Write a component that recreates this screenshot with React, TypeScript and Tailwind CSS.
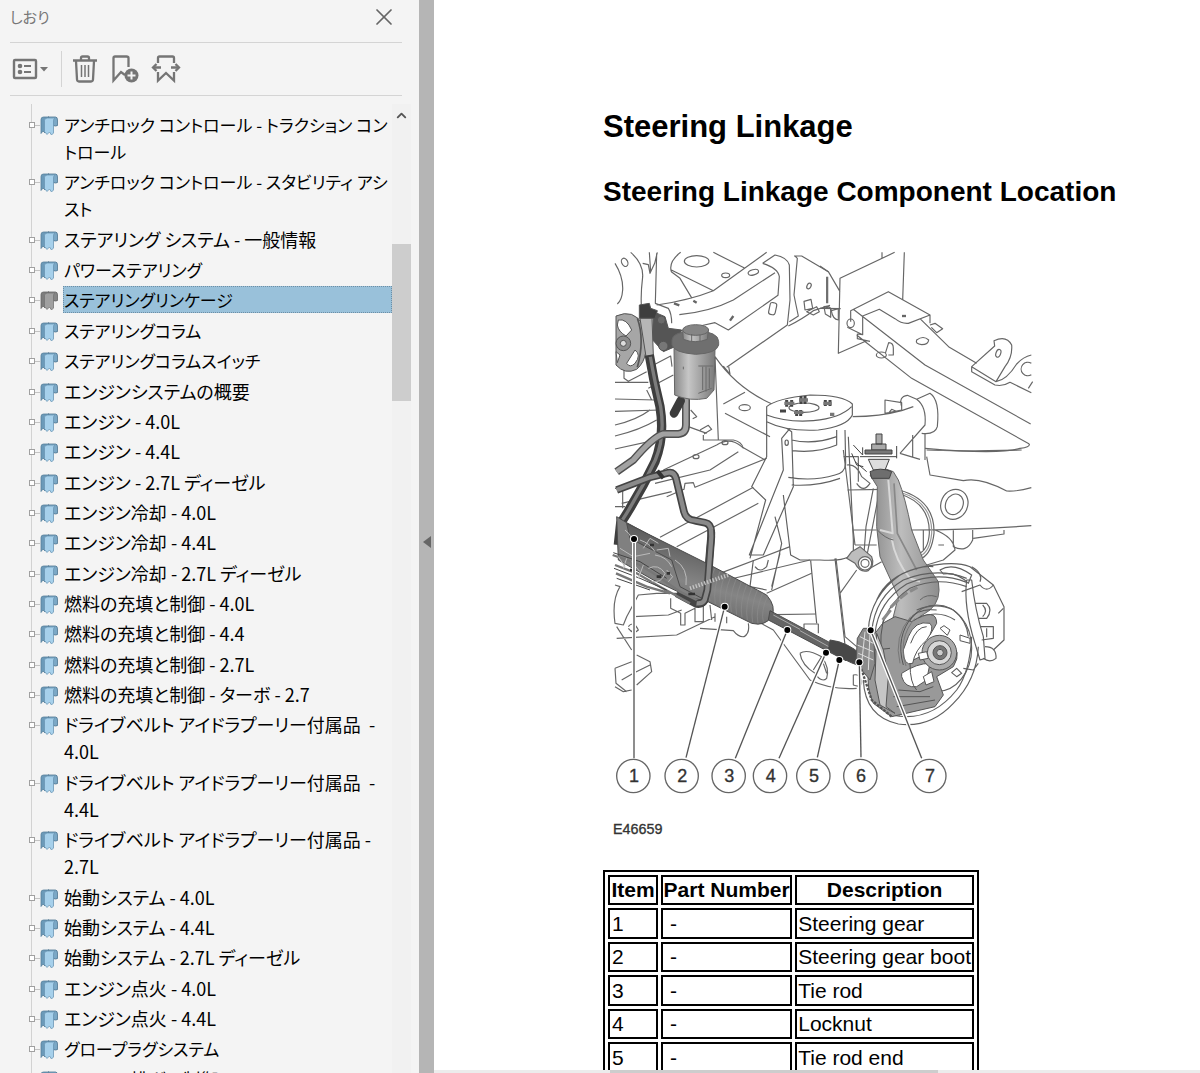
import { ChevronUp, X } from "lucide-react";

const bookmarks = [
  { title: "アンチロック コントロール - トラクション コン\nトロール" },
  { title: "アンチロック コントロール - スタビリティ アシ\nスト" },
  { title: "ステアリング システム - 一般情報" },
  { title: "パワーステアリング" },
  { title: "ステアリングリンケージ", selected: true },
  { title: "ステアリングコラム" },
  { title: "ステアリングコラムスイッチ" },
  { title: "エンジンシステムの概要" },
  { title: "エンジン - 4.0L" },
  { title: "エンジン - 4.4L" },
  { title: "エンジン - 2.7L ディーゼル" },
  { title: "エンジン冷却 - 4.0L" },
  { title: "エンジン冷却 - 4.4L" },
  { title: "エンジン冷却 - 2.7L ディーゼル" },
  { title: "燃料の充填と制御 - 4.0L" },
  { title: "燃料の充填と制御 - 4.4" },
  { title: "燃料の充填と制御 - 2.7L" },
  { title: "燃料の充填と制御 - ターボ - 2.7" },
  { title: "ドライブベルト アイドラプーリー付属品  -\n4.0L" },
  { title: "ドライブベルト アイドラプーリー付属品  -\n4.4L" },
  { title: "ドライブベルト アイドラプーリー付属品 -\n2.7L" },
  { title: "始動システム - 4.0L" },
  { title: "始動システム - 4.4L" },
  { title: "始動システム - 2.7L ディーゼル" },
  { title: "エンジン点火 - 4.0L" },
  { title: "エンジン点火 - 4.4L" },
  { title: "グロープラグシステム" },
  { title: "エンジン排ガス制御" },
];

// kanji or digits in the title
const isMixed = (title: string) => /[\u4e00-\u9fff0-9]/.test(title);

const parts = ["Steering gear", "Steering gear boot", "Tie rod", "Locknut", "Tie rod end"];

// dot on the part -> numbered circle
const callouts = [
  { n: 1, dot: [102, 897], end: [102, 1555], cx: 100 },
  { n: 2, dot: [374, 1100], end: [258, 1553], cx: 245 },
  { n: 3, dot: [562, 1170], end: [406, 1555], cx: 386 },
  { n: 4, dot: [678, 1238], end: [537, 1555], cx: 510 },
  { n: 5, dot: [718, 1260], end: [652, 1552], cx: 640 },
  { n: 6, dot: [778, 1267], end: [783, 1552], cx: 781 },
  { n: 7, dot: [812, 1171], end: [965, 1555], cx: 988 },
];

function BookmarkIcon({ selected }: { selected?: boolean }) {
  return (
    <svg viewBox="0 0 18 20" className="mt-[5px] h-5 w-[18px] shrink-0" strokeWidth="0.8" aria-hidden="true">
      <path d="M1 3.500 Q1 1 3.500 1 H9 L5 4 V17 L3 15 L1 17.500 Z" fill={selected ? "#7d7d7d" : "#6b9ab9"} stroke={selected ? "#666" : "#557f9b"} />
      <path d="M8 1 H15.500 Q17.500 1 17.500 4 V9.500 Q16 10.500 13 9.500 V4 Z" fill={selected ? "#858585" : "#7ba8c6"} stroke={selected ? "#636363" : "#4f7590"} />
      <path d="M4.500 4.500 Q4.500 2 7.500 2 H15 Q13.500 2.500 13.500 5 V17 L11.500 19 L9.500 16 L7 18.500 L4.500 15.500 Z" fill={selected ? "#a0a0a0" : "#a6d0eb"} stroke={selected ? "#757575" : "#6c97b5"} />
    </svg>
  );
}

function Toolbar() {
  return (
    <div className="mr-[17px] ml-[10px] flex h-[53px] items-center border-b border-[#d4d4d4] text-[#757575]">
      <button aria-label="オプション" className="flex h-9 w-[41px] items-center">
        <svg viewBox="0 0 38 24" className="h-6 w-[38px]">
          <rect x="4" y="3" width="22" height="18" rx="1" fill="none" stroke="currentColor" strokeWidth="2.400" />
          <circle cx="10" cy="9" r="2.300" fill="currentColor" />
          <circle cx="10" cy="15" r="2.300" fill="currentColor" />
          <path d="M14 9 H21 M14 15 H21" stroke="currentColor" strokeWidth="2" />
          <path d="M30 10 H38 L34 14.500 Z" fill="currentColor" />
        </svg>
      </button>
      <span className="ml-[10px] h-9 w-px bg-[#d4d4d4]" />
      <button aria-label="削除" className="ml-[10px]">
        <svg viewBox="0 0 26 30" className="h-[30px] w-[26px]" fill="none" stroke="currentColor" strokeWidth="2.300">
          <path d="M1 6.500 H25 M9 6 V4 Q9 2.500 10.500 2.500 H15.500 Q17 2.500 17 4 V6" />
          <path d="M4 7 L5 25.500 Q5.200 27.500 7 27.500 H19 Q20.800 27.500 21 25.500 L22 7" />
          <path d="M9.500 11 V23 M13 11 V23 M16.500 11 V23" strokeWidth="1.500" />
        </svg>
      </button>
      <button aria-label="しおりを追加" className="ml-[13px]">
        <svg viewBox="0 0 30 30" className="h-[30px] w-[30px]" fill="none" stroke="currentColor" strokeWidth="2.300">
          <path d="M14 21 L10 18 L2.500 26.500 V4 Q2.500 2.500 4 2.500 H15.500 Q17.500 2.500 17.500 4 V13" />
          <circle cx="20.500" cy="21.500" r="7" fill="currentColor" stroke="none" />
          <path d="M16.500 21.500 H24.500 M20.500 17.500 V25.500" stroke="#f4f4f4" strokeWidth="2" />
        </svg>
      </button>
      <button aria-label="しおりを展開" className="ml-[10px]">
        <svg viewBox="0 0 30 30" className="h-[30px] w-[30px]" fill="none" stroke="currentColor" strokeWidth="2.300">
          <path d="M7 9 V4 Q7 2.500 8.500 2.500 H21.500 Q23 2.500 23 4 V9 M7 18 V26.500 L15 19 L23 26.500 V18" />
          <path d="M2 13.500 H10 M20 13.500 H28" />
          <path d="M5.500 10 L2 13.500 L5.500 17 M24.500 10 L28 13.500 L24.500 17" />
        </svg>
      </button>
    </div>
  );
}

function SteeringDiagram() {
  return (
    <svg viewBox="0 0 1350 1800" className="block w-[450px]" role="img" aria-label="Steering linkage component location">
      <defs>
        <linearGradient id="can" x1="0" x2="1">
          <stop offset="0" stopColor="#888" />
          <stop offset="0.35" stopColor="#c6c6c6" />
          <stop offset="1" stopColor="#7a7a7a" />
        </linearGradient>
        <linearGradient id="knuckle" x1="0" x2="1">
          <stop offset="0" stopColor="#8a8a8a" />
          <stop offset="0.45" stopColor="#bdbdbd" />
          <stop offset="1" stopColor="#8d8d8d" />
        </linearGradient>
        <linearGradient id="boot" x1="0" y1="1" x2="0.4" y2="0">
          <stop offset="0" stopColor="#4e4e4e" />
          <stop offset="0.5" stopColor="#858585" />
          <stop offset="1" stopColor="#4a4a4a" />
        </linearGradient>
      </defs>

      {/* chassis, upper left */}
      <g fill="none" stroke="#666" strokeWidth="3.500" strokeLinejoin="round">
        <path d="M45 70 Q70 110 68 150 Q66 180 52 192 M92 37 Q130 70 128 110 Q122 160 124 195 M128 70 L145 74 L150 100 L164 70 L172 37 M148 37 L152 95 M170 40 L166 190 L205 205 Q215 220 215 250" />
        <ellipse cx="74" cy="67" rx="9" ry="13" transform="rotate(-25 74 67)" />
        <path d="M242 37 Q205 65 214 95 L240 115 L276 175 M214 90 L340 152 L500 37 M340 37 L435 85 M170 195 Q270 180 340 152 M238 224 Q330 215 400 180 L525 98" />
        <ellipse cx="290" cy="64" rx="37" ry="17" />
        <ellipse cx="377" cy="106" rx="12" ry="7" />
        <ellipse cx="460" cy="97" rx="16" ry="8" transform="rotate(-15 460 97)" />
        <path d="M488 70 Q535 85 538 110 L534 166 L385 270 L345 248 L300 258 M488 70 L525 45 Q562 52 568 75 L570 180 L562 255 L380 382 M585 48 L592 55 L582 165 L588 195 L595 228 L568 245 M582 48 L605 48 L685 95 M565 258 Q610 235 640 212 L690 196 M683 110 V190" />
        <rect x="508" y="188" width="20" height="36" rx="7" transform="rotate(12 518 206)" />
        <ellipse cx="627" cy="138" rx="6" ry="9" transform="rotate(25 627 138)" />
        <path d="M612 184 L633 178 L638 205 L615 210 Z M620 215 L650 200 L658 215 L640 225 Z M672 200 L692 206 V232 L676 222 Z" />
        <path d="M222 190 L238 196 M280 182 L290 188 M390 242 L400 228" strokeWidth="7" />
        <path d="M72 390 V415 L85 424 L140 395 M145 445 L220 405 M140 450 L155 480 M45 427 H145 M45 477 L165 480 M45 514 L180 510 M45 555 Q110 540 150 510 M45 588 Q120 570 170 540 M45 627 L160 602 M148 382 L212 348 L216 380" />
        <path d="M345 350 L355 600 M345 350 Q410 445 516 492 M370 378 L390 402 L386 380 M370 492 L435 457 M375 520 L510 590 M272 510 L290 530 L278 536 M265 560 L320 580 M300 570 L325 556 L335 568 L312 582 M310 585 V600 H400 Q425 605 430 625" />
        <ellipse cx="434" cy="503" rx="17" ry="9" />
        <ellipse cx="375" cy="608" rx="9" ry="6" />
        <ellipse cx="288" cy="650" rx="9" ry="6" />
        <path d="M190 690 L350 615 Q390 590 425 620 L495 660 M165 730 L330 690 L415 635 M200 770 L252 748 L255 730 L280 728 L285 742 L500 655 M65 790 L215 755 M180 892 L460 742 M230 920 L475 790 M320 1015 L570 920 M380 1020 L630 960 M500 1060 L635 1000 M520 1124 L648 1122" />
      </g>

      {/* rail and bracket, upper right */}
      <g transform="translate(660 0)" fill="none" stroke="#666" strokeWidth="3.500" strokeLinejoin="round">
        <path d="M224 37 L60 115 L55 340 L140 302 M186 37 V56 M253 37 L248 180 M0 78 L25 95 L60 155 M20 110 V190 M0 205 L62 206" />
        <path d="M92 245 V212 L205 155 L330 225 V250 M330 225 L265 250 Q245 252 225 236 L178 208 L128 228 V284 L82 262 M100 208 L315 375 L632 552 M110 285 L275 415 L628 612 M300 236 L388 322 L470 370 M128 284 L112 282 V296 L150 304" />
        <ellipse cx="92" cy="250" rx="11" ry="13" />
        <path d="M12 200 Q30 195 34 212 L55 206 V240 Q38 238 34 212 M330 255 L345 250 L368 266 L350 278 L334 262 M196 340 L206 308 Q220 308 220 325 V345 H205" />
        <ellipse cx="184" cy="345" rx="15" ry="9" />
        <path d="M290 300 Q310 285 326 300 Q325 314 305 314 Q285 312 290 300 Z" />
        <path d="M246 228 H258" strokeWidth="7" />
        <path d="M455 380 L524 318 L522 302 Q560 285 575 315 Q578 350 555 380 L528 425 L455 380 V395 L525 435 Q550 440 570 427 L634 458 M528 425 Q560 420 590 372 Q610 350 634 345 M634 370 A20 20 0 1 0 634 404 M625 445 L638 425" />
        <ellipse cx="535" cy="340" rx="7" ry="12" transform="rotate(20 535 340)" />
        <path d="M315 625 Q540 645 600 625 Q630 622 628 612" />
        <path d="M195 520 V480 L245 488 V510 Z M245 500 Q235 470 262 466 L290 478 L330 460 Q360 480 352 560 Q345 585 305 580 M290 478 Q320 500 315 555 L240 640 M98 530 Q180 530 245 512 L280 500 M205 520 L215 508 L232 515 M278 585 V650 M315 580 V660 M240 640 L300 658" />
      </g>

      {/* strut tower */}
      <g fill="none" stroke="#606060" strokeWidth="3.500" strokeLinejoin="round">
        <path d="M500 500 Q530 475 630 465 Q730 465 757 492 V525 Q740 560 655 570 Q560 575 500 545 Z" fill="#fff" />
        <path d="M500 525 Q560 548 640 542 Q720 535 755 500 M500 545 V650 L455 740 L497 780 L450 955 M570 565 L545 595 L550 690 L448 945 L490 945 L580 740 L575 575 L560 565 M575 600 Q640 615 710 590 M578 632 Q650 640 710 615 V570 M565 712 Q640 725 705 705 Q735 700 737 670 L735 570 M575 735 Q650 740 720 715 M745 590 L760 900 V940 Q740 965 660 960 H600 L572 945 L550 765 M525 830 L545 910 L515 1050 M540 940 L515 1040 M632 962 L650 1150 M705 955 L735 1215 M460 960 L450 1040 L500 1050" />
        <ellipse cx="612" cy="503" rx="45" ry="14" />
        <ellipse cx="560" cy="608" rx="5" ry="8" />
        <path d="M465 980 Q480 1000 500 980 L505 960" />
        <path d="M560 480 V500 M575 480 V500 M603 468 V492 M615 468 V492 M590 510 V528 M602 510 V528 M676 480 V498 M690 480 V498 M540 513 H558" strokeWidth="9" stroke="#444" />
        <path d="M553 490 H583 M597 480 H624 M582 517 H610 M670 490 H695 M690 523 H703" strokeWidth="10" stroke="#777" />
      </g>

      {/* subframe, lower left */}
      <g fill="none" stroke="#666" strokeWidth="3.500" strokeLinejoin="round">
        <path d="M45 1035 L60 1040 Q35 1080 45 1150 L70 1155 L80 1130 L115 1065 L170 1060 H240 M50 1160 L95 1230 M50 1195 L230 1185 L345 1130 M100 1130 L205 1125 L245 1110 M85 1160 Q100 1140 115 1170 Q100 1185 85 1165 M212 1075 V1105 L242 1120 V1155 H255 V1120 L285 1105 V1145 H310 V1095 M330 1095 L335 1140 M345 1120 V1145 M380 1130 V1150 M300 1165 L400 1172 Q415 1192 432 1190 Q450 1180 445 1150 M465 1140 L520 1170 L630 1320 Q690 1350 770 1345 M110 1245 L150 1265 L155 1295 L110 1335 M45 1285 L95 1265 M45 1285 L48 1330 L80 1355 M65 1320 L100 1300 L150 1275 M45 1340 L70 1355 L95 1350" />
        <path d="M600 1240 Q620 1225 665 1250 Q690 1285 680 1315 Q665 1330 645 1300 Q605 1275 600 1240 M665 1250 L640 1290 M670 1270 L680 1300" />
        <path d="M612 1170 V1152 H655 V1180 M760 1305 Q780 1300 785 1325 Q785 1345 760 1335 Z" />
        <path d="M45 745 H68 V805 M45 800 L75 800" />
      </g>

      {/* pump pulley */}
      <g stroke="#555" strokeWidth="3">
        <path d="M48 228 Q100 205 130 255 Q155 350 110 388 Q75 405 48 375 Z" fill="#a6a6a6" />
        <path d="M55 240 Q80 235 95 270 L78 288 Q55 275 52 255 Z M105 330 Q125 345 105 370 Q90 385 80 370 Z M48 335 L60 345 L52 368 Z" fill="#fff" />
        <circle cx="70" cy="310" r="22" fill="#8a8a8a" />
        <circle cx="70" cy="310" r="9" fill="#ddd" />
        <path d="M112 235 Q135 300 112 382" fill="none" strokeWidth="5" />
        <path d="M160 215 L195 230 L205 265 L245 270 L225 320 L190 335 L158 300 Z" fill="#555" />
        <path d="M118 195 L148 190 L152 205 L172 212 L165 235 L118 235 Z" fill="#3e3e3e" />
        <path d="M120 235 L156 235 L160 345 L138 350 Z" fill="#b6b6b6" />
        <circle cx="190" cy="318" r="14" fill="#777" />
        <circle cx="184" cy="240" r="12" fill="#6b6b6b" />
      </g>

      {/* hoses and lines */}
      <g fill="none" strokeLinejoin="round" strokeLinecap="butt">
        <path d="M148 345 Q160 420 180 500 Q195 590 165 665 Q120 760 62 850 L55 915" stroke="#3e3e3e" strokeWidth="28" />
        <path d="M151 350 Q163 420 182 500 Q196 590 166 660 Q122 755 66 842" stroke="#7c7c7c" strokeWidth="10" />
        <path d="M258 470 V555 Q258 580 235 582 L190 582 Q160 590 100 660 L50 695" stroke="#4f4f4f" strokeWidth="24" />
        <path d="M258 470 V555 Q258 580 235 582 L190 582 Q160 590 100 660 L50 695" stroke="#a2a2a2" strokeWidth="15" />
        <path d="M50 750 L150 712 L205 698 Q222 695 228 715 L252 815 Q258 840 285 842 L315 848 Q335 852 334 880 L318 1070 Q312 1095 290 1092 L230 1060" stroke="#444" strokeWidth="23" />
        <path d="M50 750 L150 712 L205 698 Q222 695 228 715 L252 815 Q258 840 285 842 L315 848 Q335 852 334 880 L318 1070 Q312 1095 290 1092" stroke="#8a8a8a" strokeWidth="13" />
        <path d="M172 692 L190 715" stroke="#333" strokeWidth="12" />
        <path d="M222 520 L242 482" stroke="#3c3c3c" strokeWidth="26" strokeLinecap="round" />
      </g>

      {/* fluid reservoir */}
      <g stroke="#666" strokeWidth="3">
        <path d="M222 325 L224 465 Q270 485 320 475 L342 450 L345 325 Z" fill="url(#can)" />
        <path d="M295 378 H340 M318 380 V455 M308 380 V450 M328 385 V445 M295 460 L335 445 M250 380 V388" fill="none" stroke="#6a6a6a" />
        <path d="M216 300 Q216 275 287 272 Q356 275 356 305 V315 Q350 340 287 343 Q222 338 216 315 Z" fill="#6f6f6f" />
        <path d="M248 270 L250 298 Q285 312 322 298 L325 270 Z" fill="url(#can)" />
        <ellipse cx="287" cy="270" rx="39" ry="16" fill="#858585" />
        <path d="M275 282 V305 M300 284 V304" />
      </g>

      {/* steering rack, boot and tie rod */}
      <g stroke="#4b4b4b" strokeWidth="3" strokeLinejoin="round">
        <path d="M50 830 L80 848 L250 940 L320 975 L325 1085 L270 1072 L160 1020 L55 960 Z" fill="#808080" />
        <path d="M80 850 L330 975 L500 1065 Q530 1100 515 1130 Q495 1160 455 1150 L330 1088 L240 1040 L215 960 L90 895 Z" fill="url(#boot)" />
        <g stroke="#8d8d8d" strokeWidth="2" fill="none">
          <path d="M344 986 Q320 1040 330 1084 M360 994 Q338 1048 346 1092 M376 1002 Q354 1056 362 1100 M392 1010 Q370 1064 378 1108 M408 1018 Q386 1072 394 1116 M424 1026 Q402 1080 410 1124 M440 1034 Q418 1088 426 1132 M456 1042 Q434 1096 442 1140 M472 1050 Q450 1104 458 1148 M488 1060 Q466 1110 474 1150 M502 1070 Q482 1115 490 1145" />
        </g>
        <path d="M333 870 L334 890 L322 1050 L314 1080 Q308 1092 290 1090" fill="none" stroke="#444" strokeWidth="23" />
        <path d="M333 870 L334 890 L322 1050 L314 1080 Q308 1092 290 1090" fill="none" stroke="#8a8a8a" strokeWidth="13" />
        <path d="M510 1112 L690 1208 L750 1240 L738 1262 L680 1232 L505 1140 Z" fill="#656565" />
        <path d="M600 1172 L690 1222 M520 1125 L600 1168" fill="none" stroke="#aaa" />
        <path d="M690 1200 Q740 1205 785 1245 L772 1275 Q740 1265 685 1230 Z" fill="#484848" />
      </g>
      <g fill="none" stroke="#555" strokeWidth="3">
        <path d="M38 945 Q80 960 120 975 L160 1000 L240 1055 L290 1080 M45 975 L110 1000 L180 1040 L270 1090 M48 1000 L140 1040 L210 1060" strokeWidth="7" stroke="#777" />
        <path d="M40 938 L120 965 L200 1015 M42 985 L120 1015 L200 1050 M50 1015 L150 1050" stroke="#444" />
        <path d="M55 950 L75 980 M80 955 L70 985 M95 965 L120 995 M130 975 L115 1015 M145 985 Q175 970 195 1000 Q185 1030 155 1025 M165 945 Q200 950 215 980 M120 900 Q150 910 165 935 M200 990 L218 1010 L205 1025 M225 960 Q265 985 258 1035 M75 870 Q105 890 100 940 M130 925 L150 895 L175 910 M170 930 L205 925 L210 950 M60 925 L100 950 L150 940" stroke="#bbb" strokeWidth="3" />
        <path d="M270 1045 L385 1005" stroke="#c4c4c4" strokeWidth="12" strokeDasharray="4 5" />
        <path d="M150 915 h12 M90 990 h12 M200 1000 h10 M170 1010 h14 M265 1062 h20" stroke="#333" strokeWidth="8" />
      </g>

      {/* right subframe */}
      <g transform="translate(660 630)" fill="none" stroke="#666" strokeWidth="3.500" strokeLinejoin="round">
        <path d="M320 20 L330 75 L430 92 Q480 80 560 123 Q590 125 634 113 M270 240 Q450 240 634 227 M320 0 Q400 5 605 0 M400 237 V290 Q440 310 458 270 V240 M460 265 L552 252 V240 M345 240 Q400 260 405 300 L370 330 L320 345 M355 285 H372" />
        <ellipse cx="403" cy="163" rx="40" ry="46" transform="rotate(25 403 163)" />
        <ellipse cx="403" cy="163" rx="26" ry="32" transform="rotate(25 403 163)" />
        <path d="M238 120 Q345 150 342 250 Q335 310 305 325 M240 132 Q330 160 328 250 Q325 300 295 312 M310 240 V300 M275 240 V290" />
        <path d="M238 126 Q338 155 335 250 Q330 305 300 318" stroke="#999" />
        <path d="M70 0 L105 285 M98 240 H170 M82 120 L190 118 M105 285 H170 M185 335 L150 355 M110 360 L60 430 M48 325 L75 560 L110 590 M70 20 L115 20 V95 M80 45 Q110 40 125 80 L150 100 Q130 130 110 100" />
        <path d="M180 115 L142 310 M160 115 L138 230 L132 310" />
        <path d="M95 305 L120 290 L155 320 Q165 345 145 362 Q120 370 105 340 L80 325 Z" fill="#bdbdbd" />
        <circle cx="135" cy="340" r="20" fill="#fff" />
        <circle cx="135" cy="340" r="12" />
      </g>

      {/* wheel knuckle, upper arm */}
      <g transform="translate(660 630)" stroke="#666" strokeWidth="3" strokeLinejoin="round">
        <path d="M150 75 Q180 45 220 65 L235 90 Q255 140 275 240 L310 330 L355 395 Q365 450 330 480 L270 520 L215 520 L235 440 L180 320 L170 230 L172 110 Z" fill="url(#knuckle)" />
        <path d="M205 90 L218 250 L180 240 M215 265 Q225 330 270 385 L300 395" fill="none" stroke="#d8d8d8" strokeWidth="6" />
        <path d="M222 100 L232 250 L290 360" fill="none" stroke="#888" strokeWidth="5" />
        <path d="M172 240 Q195 265 220 270 M300 450 Q320 430 350 440" fill="none" />
      </g>

      {/* brake disc, shield and caliper */}
      <g transform="translate(660 630)" fill="none" stroke="#606060" strokeWidth="3.500" strokeLinejoin="round">
        <path d="M170 450 Q200 380 290 355 Q400 330 450 350 L520 405 L552 470 V570 L520 600 M145 540 Q150 440 240 375 Q300 345 340 350" />
        <path d="M360 360 Q400 335 455 375 L445 400 Q410 365 370 372 Z M440 390 Q430 470 465 580 L480 630 L495 625 L490 560 Q465 480 455 390 Z" fill="#fff" />
        <path d="M455 350 Q490 370 480 395 M425 425 L480 405 Q500 430 520 405 M465 460 H500 Q520 480 500 505 L475 505 M480 530 H520 V565 L485 570 M488 465 Q505 482 488 500 M500 535 V562 M535 490 L550 475 M495 590 Q530 590 528 625 Q510 640 490 625" />
        <path d="M130 690 Q135 800 235 822 Q330 835 400 760 Q470 690 475 590 M215 795 Q330 820 410 720 Q450 665 455 560 M150 690 Q165 780 240 795 M475 640 L460 660 L430 655 M410 655 L425 670 L410 680 L395 668 Z" />
        <path d="M155 545 Q165 440 250 390 Q350 350 440 385 M165 550 Q175 455 260 402 Q350 362 440 397 M180 560 Q190 470 270 415 Q350 378 440 410 M290 480 Q350 455 400 480 Q440 510 445 560 M300 500 Q360 480 405 510" />
        <path d="M188 510 L212 480 M212 472 L236 448 M240 445 L262 428 M270 424 L292 412" strokeWidth="9" stroke="#8a8a8a" />
        <ellipse cx="350" cy="595" rx="105" ry="130" />
      </g>

      {/* wheel knuckle, hub side */}
      <g transform="translate(660 630)" stroke="#555" strokeWidth="3" strokeLinejoin="round">
        <path d="M188 520 L225 500 L275 515 Q350 470 350 520 L330 555 Q280 560 262 610 L280 630 L340 600 L385 580 Q430 600 400 650 L350 680 L370 735 L345 770 L215 800 L160 760 Q140 720 145 660 L130 590 L165 550 Z" fill="#999" />
        <path d="M265 560 Q285 510 330 520 Q345 535 320 570 Q285 600 278 640 Q250 650 250 600 Z M245 670 Q290 640 330 640 L320 690 L290 710 Q255 715 245 680 Z" fill="#fff" />
        <path d="M272 580 Q290 530 320 530 M250 645 Q225 560 280 495 Q310 475 350 480 M235 720 L300 725 L340 710 M220 740 L330 740 M230 770 L345 750 M165 600 L210 595 M190 510 Q170 600 200 690 M270 640 Q270 700 290 720" fill="none" />
        <path d="M240 640 Q220 560 272 500 M258 648 Q232 565 285 505" fill="none" stroke="#777" />
        <path d="M170 550 L190 600 L205 680 L198 770 L225 790 L180 765 L165 690 Z" fill="#c5c5c5" />
        <circle cx="358" cy="608" r="52" fill="#aaa" />
        <circle cx="358" cy="608" r="36" fill="#d8d8d8" />
        <circle cx="360" cy="608" r="21" fill="#777" />
        <circle cx="360" cy="608" r="10" fill="#ccc" />
        <path d="M360 535 L372 527 L390 540 L382 556 Z M420 555 L450 565 V580 L420 572 Z M295 610 L320 605 L325 625 L300 630 Z M310 680 L335 665 L342 695 L318 705 Z" fill="#fff" />
        <path d="M112 565 L130 535 L160 535 L165 640 L150 690 L108 640 Z" fill="#8b8b8b" />
        <path d="M120 560 L160 580 M112 585 L160 605 M115 610 L160 630 M135 545 L125 640 M150 550 L145 660" stroke="#ddd" fill="none" />
        <path d="M120 645 L135 690 L155 750 L215 800" fill="none" strokeWidth="7" strokeDasharray="8 4" />
      </g>

      {/* upper ball joint */}
      <g transform="translate(660 630)" stroke="#444" strokeWidth="3">
        <path d="M168 -48 H186 V-18 H168 Z M155 -18 H198 V0 H155 Z" fill="#aaa" />
        <path d="M135 0 H216 V12 H135 Z" fill="#777" />
        <path d="M145 28 H208 L195 60 H160 Z" fill="#ddd" />
        <path d="M150 65 Q180 50 215 65 L208 85 H155 Z" fill="#6e6e6e" />
        <path d="M100 -15 L128 15 V-8 M230 -12 V25 M95 10 L110 45 L130 50 M120 20 H230 M105 35 L140 65" fill="none" />
      </g>

      {/* callouts */}
      {callouts.map(({ n, dot, end, cx }) => (
        <g key={n}>
          <line x1={dot[0]} y1={dot[1]} x2={end[0]} y2={end[1]} stroke="#fff" strokeWidth="12" />
          <line x1={dot[0]} y1={dot[1]} x2={end[0]} y2={end[1]} stroke="#555" strokeWidth="4" />
          <circle cx={dot[0]} cy={dot[1]} r="12" fill="#fff" />
          <circle cx={dot[0]} cy={dot[1]} r="9" fill="#000" />
          <circle cx={cx} cy="1608" r="50" fill="#fff" stroke="#666" strokeWidth="4" />
          <text x={cx + 2} y="1627" textAnchor="middle" fontSize="54" fill="#333" stroke="#333">{n}</text>
        </g>
      ))}
      <text x="39" y="1782" fontSize="43" fill="#333" stroke="#333">E46659</text>
    </svg>
  );
}

export default function App() {
  return (
    <div className="flex h-screen overflow-hidden bg-white text-black">
      {/* BOOKMARKS PANEL */}
      <aside className="flex w-[419px] shrink-0 flex-col overflow-hidden bg-[#f4f4f4] font-['Noto_Sans_CJK_JP',sans-serif] [font-feature-settings:'palt']">
        <header className="mr-[17px] ml-[10px] flex h-[43px] items-center justify-between border-b border-[#d4d4d4] pb-2">
          <h2 className="text-[15px] text-[#777]">しおり</h2>
          <button aria-label="閉じる" className="mr-1 text-[#666]">
            <X size={28} strokeWidth={1.500} />
          </button>
        </header>
        <Toolbar />

        <div className="mt-2 flex min-h-0 flex-1">
          <nav className="ml-[31px] flex w-[361px] flex-col border-l border-[#d2d2d2] pt-[7px]">
            <ul className="-mb-5 flex flex-1 flex-col justify-between">
              {bookmarks.map((b) => (
                <li key={b.title} className="-ml-[3px] flex shrink-0">
                  <span className="mt-[11px] h-[6px] w-[6px] shrink-0 border border-[#a0a0a0] bg-white" />
                  <span className="mt-[14px] h-px w-[5px] shrink-0 bg-[#c4c4c4]" />
                  <BookmarkIcon selected={b.selected} />
                  <a
                    href="#"
                    className={`ml-[5px] flex-1 whitespace-pre ${isMixed(b.title) ? "text-[18px]" : "text-[17px]"} ${
                      b.selected
                        ? "border border-dotted border-[#6d8ea5] bg-[#99c1da] leading-[25px]"
                        : "pl-px leading-[27px]"
                    }`}
                  >
                    {b.title}
                  </a>
                </li>
              ))}
            </ul>
          </nav>
          <div className="flex w-[19px] flex-col items-center bg-[#f1f1f1]">
            <button aria-label="上へ" className="mt-1 mb-[121px] text-[#555]">
              <ChevronUp size={15} strokeWidth={3} />
            </button>
            <div className="h-[157px] w-full shrink-0 bg-[#cdcdcd]" />
          </div>
        </div>
      </aside>

      <button aria-label="パネルを閉じる" className="flex w-[15px] shrink-0 items-center justify-center bg-[#b5b5b5]">
        <svg viewBox="0 0 8 14" className="mt-[10px] h-[14px] w-2">
          <path d="M8 1 V13 L0 7 Z" fill="#666" />
        </svg>
      </button>

      {/* DOCUMENT */}
      <div className="flex min-w-0 flex-1 flex-col font-['Liberation_Sans',sans-serif]">
        <main className="min-h-0 flex-1 overflow-hidden pt-[107px] pl-[169px]">
          <h1 className="text-[31px] leading-[40px] font-bold">Steering Linkage</h1>
          <h2 className="mt-[25px] text-[28px] leading-[40px] font-bold">Steering Linkage Component Location</h2>
          <div className="mt-[28px] -ml-[3px]">
            <SteeringDiagram />
          </div>
          <table className="mt-[30px] w-[376px] border-separate border-spacing-[3px] border-2 border-black text-[21px] leading-[26px]">
            <thead>
              <tr className="h-[30px]">
                <th className="w-[50px] border-2 border-black p-0">Item</th>
                <th className="w-[132px] border-2 border-black p-0">Part Number</th>
                <th className="border-2 border-black p-0">Description</th>
              </tr>
            </thead>
            <tbody>
              {parts.map((part, i) => (
                <tr key={part} className="h-[30px] odd:h-[31px]">
                  <td className="border-2 border-black px-[2px] py-0">{i + 1}</td>
                  <td className="border-2 border-black py-0 pl-[7px]">-</td>
                  <td className="border-2 border-black px-px py-0 whitespace-nowrap">{part}</td>
                </tr>
              ))}
            </tbody>
          </table>
        </main>
        <div className="h-[3px] shrink-0 bg-[#ececec] pl-[176px]">
          <div className="h-full w-[328px] bg-[#cdcdcd]" />
        </div>
      </div>
    </div>
  );
}
